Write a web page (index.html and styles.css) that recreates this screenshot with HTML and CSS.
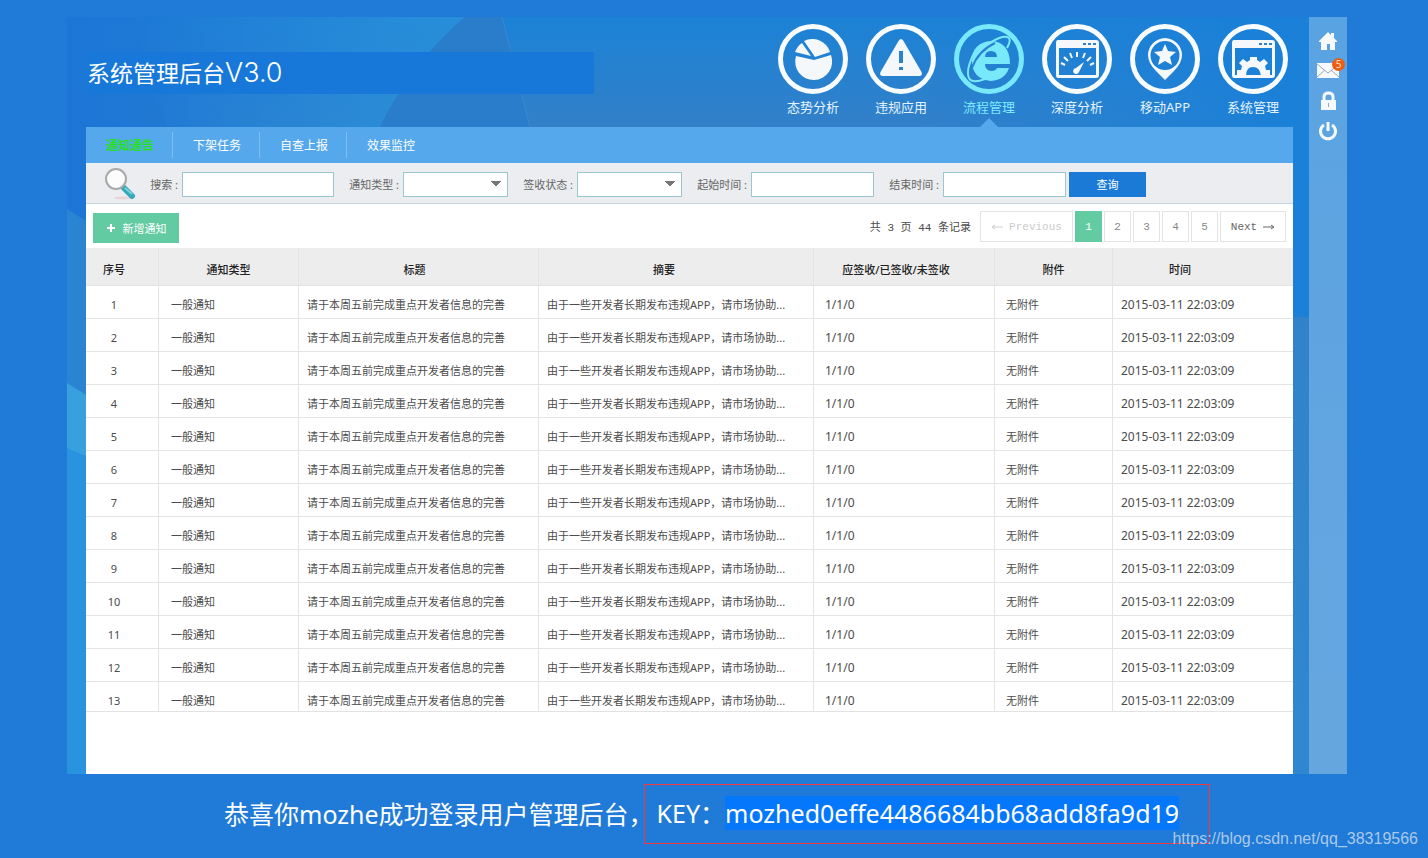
FILE: index.html
```
<!DOCTYPE html>
<html lang="zh-CN">
<head>
  <meta charset="UTF-8">
  <meta name="viewport" content="width=device-width, initial-scale=1">
  <title>系统管理后台V3.0</title>
  <link rel="stylesheet" href="styles.css">
</head>
<body>
  <div class="app">
    <div class="main">
      <svg class="backdrop" viewBox="0 0 1242 757" preserveAspectRatio="none" aria-hidden="true">
        <defs>
          <linearGradient id="beam" x1="0" y1="0" x2="1" y2="0">
            <stop offset="0" stop-color="#2a90da" stop-opacity="0"/>
            <stop offset="1" stop-color="#2a90da" stop-opacity=".9"/>
          </linearGradient>
          <linearGradient id="sky" x1="0" y1="0" x2="0" y2="1">
            <stop offset="0" stop-color="#1c82d6"/>
            <stop offset=".15" stop-color="#3380c8"/>
            <stop offset="1" stop-color="#2f88cf"/>
          </linearGradient>
          <linearGradient id="edge" x1="0" y1="0" x2="1" y2="0">
            <stop offset="0" stop-color="#1c76d6"/>
            <stop offset="1" stop-color="#1c76d6" stop-opacity="0"/>
          </linearGradient>
          <linearGradient id="glow" x1="0" y1="0" x2="1" y2="0">
            <stop offset="0" stop-color="#1a80d8" stop-opacity="0"/>
            <stop offset="1" stop-color="#1a80d8"/>
          </linearGradient>
        </defs>
        <rect width="1242" height="757" fill="url(#sky)"/>
        <rect width="420" height="757" fill="url(#edge)"/>
        <rect x="850" width="392" height="300" fill="url(#glow)"/>
        <path d="M60 0H398Q345 45 313 110H100Z" fill="url(#beam)"/>
        <path d="M398 0H435L463 110H313Q345 45 398 0Z" fill="#2a7dcb"/>
        <path d="M435 0L463 110" stroke="#4a98d6" stroke-opacity=".5"/>
        <path d="M0 192L19 204V757H0Z" fill="#2b84d1"/>
        <path d="M0 366L19 378V757H0Z" fill="#38a0dc"/>
        <path d="M0 431L19 439V757H0Z" fill="#2993e0"/>
      </svg>

      <header class="header">
        <h1 class="brand">系统管理后台<span class="version">V3.0</span></h1>
        <nav class="nav">
          <a class="nav-item" href="#">
            <svg viewBox="0 0 70 70">
              <circle class="ring" cx="35" cy="35" r="32.5"/>
              <path d="M18 32L36 36L53 31A18.500 18.500 0 1 1 18 32Z"/>
              <path d="M37 33L26 17A18.500 18.500 0 0 1 52 28Z"/>
              <path d="M33 32L17 28A19 19 0 0 1 24 19Z"/>
            </svg>
            态势分析
          </a>
          <a class="nav-item" href="#">
            <svg viewBox="0 0 70 70">
              <circle class="ring" cx="35" cy="35" r="32.5"/>
              <path d="M32.500 17Q35 13 37.500 17L55.500 48Q57 52 53 52H17Q13 52 14.500 48Z"/>
              <path class="cut" d="M35 27V39M35 43V46"/>
            </svg>
            违规应用
          </a>
          <a class="nav-item active" href="#">
            <svg viewBox="0 0 70 70">
              <circle class="ring" cx="35" cy="35" r="32.5"/>
              <path fill-rule="evenodd" d="M56 40H31Q31 46 37 47Q42 47 43 44H55Q51 56 37 57Q18 55 18 37Q19 18 37 17Q56 18 56 40ZM31 33H43Q43 27 37 27Q31 27 31 33Z"/>
              <path class="orbit" d="M37 18Q51 10 55 14Q57 17 53 24M22 25Q11 46 15 54Q18 60 31 55"/>
              <path class="gap" d="M18 44Q24 27 41 19"/>
            </svg>
            流程管理
          </a>
          <a class="nav-item" href="#">
            <svg viewBox="0 0 70 70">
              <circle class="ring" cx="35" cy="35" r="32.5"/>
              <path fill-rule="evenodd" d="M16 16H54Q57 16 57 19V51Q57 54 54 54H16Q14 54 14 51V19Q14 16 16 16ZM17 24V51H54V24Z"/>
              <path class="dots" d="M41 20H44M46 20H49M51 20H54"/>
              <path class="line" d="M19 39L23 41M22 33L26 37M28 29L30 34M35 28V33M43 29L41 34M49 33L45 37M52 39L48 41"/>
              <path d="M42 38L37 48A3 3 0 1 1 34 44Z"/>
            </svg>
            深度分析
          </a>
          <a class="nav-item" href="#">
            <svg viewBox="0 0 70 70">
              <circle class="ring" cx="35" cy="35" r="32.5"/>
              <path fill-rule="evenodd" d="M35 14A17.500 17.500 0 0 1 52 31Q52 39 44 47L35 56L26 47Q18 39 18 31A17.500 17.500 0 0 1 35 14ZM35 17A14.500 14.500 0 1 0 35 46A14.500 14.500 0 1 0 35 17Z"/>
              <path d="M35 20L38 27L46 28L40 33L42 41L35 37L28 41L30 33L24 28L32 27Z"/>
            </svg>
            移动APP
          </a>
          <a class="nav-item" href="#">
            <svg viewBox="0 0 70 70">
              <circle class="ring" cx="35" cy="35" r="32.5"/>
              <path fill-rule="evenodd" d="M16 16H54Q57 16 57 19V51Q57 54 54 54H16Q14 54 14 51V19Q14 16 16 16ZM17 24V51H54V24Z"/>
              <path class="dots" d="M41 20H44M46 20H49M51 20H54"/>
              <path d="M19 52V46H23L24 42L21 39L25 35L29 38L32 36V33H39V36L42 38L46 35L50 39L47 42L48 46H52V52H43Q42 43 35 43Q28 43 28 52Z"/>
            </svg>
            系统管理
          </a>
        </nav>
      </header>

      <div class="panel">
        <ul class="tabs">
          <li><a class="current" href="#">通知通告</a></li>
          <li><a href="#">下架任务</a></li>
          <li><a href="#">自查上报</a></li>
          <li><a href="#">效果监控</a></li>
        </ul>

        <form class="search">
          <svg class="magnifier" viewBox="0 0 32 32" aria-hidden="true">
            <ellipse cx="19" cy="30" rx="9" ry="1.500" fill="#e8d4d6"/>
            <path d="M18 19L27 27" stroke="#8d9ba0" stroke-width="4"/>
            <path d="M20 20L28 28" stroke="#35a9ba" stroke-width="6" stroke-linecap="round"/>
            <path d="M21 20L28 26" stroke="#7fd0d8" stroke-width="2"/>
            <circle cx="12" cy="11" r="10" fill="#fcfcfc" stroke="#a9a9a9" stroke-width="2"/>
          </svg>
          <label class="short" for="keyword">搜索 :</label>
          <input class="wide" type="text" id="keyword">
          <label for="type">通知类型 :</label>
          <select id="type"><option></option></select>
          <label for="status">签收状态 :</label>
          <select id="status"><option></option></select>
          <label for="start">起始时间 :</label>
          <input type="text" id="start">
          <label for="end">结束时间 :</label>
          <input type="text" id="end">
          <button class="query" type="button">查询</button>
        </form>

        <div class="toolbar">
          <button class="add" type="button">
            <svg viewBox="0 0 10 10" aria-hidden="true"><path d="M5 1V9M1 5H9"/></svg>
            新增通知
          </button>
          <div class="pager">
            <span class="total">共 3 页 44 条记录</span>
            <button class="prev" type="button" disabled>
              <svg viewBox="0 0 12 8" aria-hidden="true"><path d="M12 4H2M4 2L1 4L4 6"/></svg>
              Previous
            </button>
            <button class="on" type="button">1</button>
            <button type="button">2</button>
            <button type="button">3</button>
            <button type="button">4</button>
            <button type="button">5</button>
            <button class="next" type="button">
              Next
              <svg viewBox="0 0 12 8" aria-hidden="true"><path d="M0 4H10M8 2L11 4L8 6"/></svg>
            </button>
          </div>
        </div>

        <table class="list">
          <colgroup>
            <col class="c-no"><col class="c-type"><col class="c-title"><col class="c-summary">
            <col class="c-sign"><col class="c-file"><col class="c-time">
          </colgroup>
          <thead>
            <tr>
              <th>序号</th>
              <th>通知类型</th>
              <th>标题</th>
              <th>摘要</th>
              <th>应签收/已签收/未签收</th>
              <th>附件</th>
              <th>时间</th>
            </tr>
          </thead>
          <tbody id="rows"></tbody>
        </table>
      </div>
    </div>

    <aside class="rail">
      <a href="#" aria-label="首页">
        <svg viewBox="0 0 20 20"><path d="M10 1L13 4V2H16V7L19 10V11H17V19H12V13H9V19H3V11H1V10Z"/></svg>
      </a>
      <a class="mail" href="#" aria-label="消息">
        <svg viewBox="0 0 22 20"><path d="M0 2H22V17H0Z"/><path class="fold" d="M0 3L11 12L22 3M0 16L8 9M22 16L14 9"/></svg>
        <span class="badge">5</span>
      </a>
      <a href="#" aria-label="锁定">
        <svg viewBox="0 0 20 20"><path d="M3 9H18V19H3Z"/><path class="shackle" d="M6 10V6Q6 2 10.500 2Q15 2 15 6V10"/><path class="fold" d="M10.500 12V16"/></svg>
      </a>
      <a href="#" aria-label="退出">
        <svg viewBox="0 0 20 20"><path class="power" d="M6 4A7.500 7.500 0 1 0 14 4M10 1V10"/></svg>
      </a>
    </aside>
  </div>

  <footer class="result">
    <span>恭喜你mozhe成功登录用户管理后台，</span>
    <div class="key">KEY：<mark>mozhed0effe4486684bb68add8fa9d19</mark></div>
  </footer>
  <div class="watermark">https://blog.csdn.net/qq_38319566</div>

  <script>
    const rows = document.getElementById("rows");
    const cells = ["一般通知", "请于本周五前完成重点开发者信息的完善", "由于一些开发者长期发布违规APP，请市场协助...", "1/1/0", "无附件", "2015-03-11 22:03:09"];

    for (let i = 1; i <= 13; i++) {
      const tr = rows.insertRow();
      tr.insertCell().textContent = i;
      cells.forEach(text => {
        tr.insertCell().textContent = text;
      });
    }
  </script>
</body>
</html>
```
FILE: styles.css
```
* {
  box-sizing: border-box;
}
body {
  margin: 0;
  padding: 17px 81px 0 67px;
  background-color: #207ad8;
  color: #4c4c4c;
  font-size: 11px;
  font-family: "Noto Sans", "Noto Sans CJK SC", sans-serif;
}
a {
  color: inherit;
  text-decoration: none;
}
button, input, select {
  font: inherit;
}
.app {
  display: flex;
}
.main {
  position: relative;
  flex: 1;
  min-width: 0;
  padding: 0 16px 0 19px;
}
.backdrop {
  position: absolute;
  top: 0;
  left: 0;
  width: 100%;
  height: 100%;
}
.header {
  position: relative;
  display: flex;
  justify-content: space-between;
  height: 110px;
  margin-right: -4px;
}
.brand {
  width: 508px;
  height: 42px;
  margin: 35px 0 0;
  padding-left: 1px;
  background-color: #1778d9;
  color: #fff;
  font-size: 23px;
  font-weight: normal;
  line-height: 42px;
}
.version {
  font-family: Inter, sans-serif;
  font-size: 27px;
  font-weight: 300;
}
.nav {
  display: flex;
  padding-top: 7px;
}
.nav-item {
  position: relative;
  display: flex;
  flex-direction: column;
  align-items: center;
  gap: 3px;
  width: 88px;
  color: #e4f3ff;
  font-size: 13px;
  line-height: 20px;
}
.nav-item svg {
  width: 70px;
  height: 70px;
  fill: #f4f8fb;
}
.nav-item .ring {
  fill: none;
  stroke: #f8fcff;
  stroke-width: 5;
}
.nav-item .cut {
  stroke: #2b80cf;
  stroke-width: 4;
}
.nav-item .dots {
  stroke: #2b80cf;
  stroke-width: 2;
}
.nav-item .line {
  stroke: #f4f8fb;
  stroke-width: 2;
}
.nav-item.active {
  color: #7ceaff;
}
.nav-item.active svg {
  fill: #78e8fb;
}
.nav-item.active .ring {
  stroke: #78e8fb;
}
.nav-item .orbit {
  fill: none;
  stroke: #78e8fb;
  stroke-width: 2;
}
.nav-item .gap {
  fill: none;
  stroke: #2b80cf;
  stroke-width: 2;
}
.nav-item.active::after {
  content: "";
  position: absolute;
  bottom: 0;
  border: 9px solid transparent;
  border-top: 0;
  border-bottom-color: #55a8ec;
}
.panel {
  position: relative;
  padding-bottom: 62px;
  background-color: #fff;
}
.tabs {
  display: flex;
  height: 36px;
  margin: 0;
  padding: 5px 0;
  background-color: #55a8ec;
  color: #fff;
  font-size: 12px;
  line-height: 28px;
  list-style: none;
}
.tabs a {
  display: block;
  padding: 0 18px 0 20px;
}
.tabs li + li {
  border-left: 1px solid #7dc0f4;
}
.tabs .current {
  color: #26e01e;
  font-weight: bold;
}
.search {
  display: flex;
  align-items: center;
  height: 41px;
  padding: 2px 18px 0;
  background-color: #ebedf0;
  border-bottom: 1px solid #c5d6de;
  color: #666;
}
.magnifier {
  width: 32px;
  height: 32px;
}
.search label {
  width: 69px;
  padding-right: 4px;
  text-align: right;
}
.search .short {
  width: 46px;
}
.search input, .search select {
  width: 123px;
  height: 25px;
  padding: 0 6px;
  background-color: #fff;
  border: 1px solid #9cc5d2;
  border-radius: 0;
}
.search .wide {
  width: 152px;
}
.search select {
  width: 105px;
  appearance: none;
  background-image: linear-gradient(to bottom left, #777 50%, transparent 50%), linear-gradient(to bottom right, #777 50%, transparent 50%);
  background-position: right 11px center, right 6px center;
  background-size: 5px 6px;
  background-repeat: no-repeat;
}
.query {
  width: 77px;
  height: 25px;
  margin-left: 3px;
  padding: 0;
  background-color: #1a7ad6;
  border: none;
  color: #fff;
}
.toolbar {
  display: flex;
  justify-content: space-between;
  height: 44px;
  padding: 7px 7px 0;
}
.add {
  display: flex;
  align-items: center;
  justify-content: center;
  gap: 7px;
  width: 86px;
  height: 30px;
  margin-top: 2px;
  padding: 0;
  background-color: #62cba2;
  border: none;
  color: #fff;
}
.add svg {
  width: 10px;
  height: 10px;
  stroke: #fff;
  stroke-width: 2;
}
.pager {
  display: flex;
  gap: 2px;
  height: 31px;
  font-family: "Liberation Mono", "Noto Sans CJK SC", monospace;
}
.pager .total {
  margin-right: 7px;
  line-height: 35px;
}
.pager button {
  width: 27px;
  padding: 0;
  background-color: #fff;
  border: 1px solid #e4e4e4;
  color: #888;
}
.pager .on {
  background-color: #62cba2;
  border-color: #62cba2;
  color: #fff;
}
.pager svg {
  width: 12px;
  height: 8px;
  fill: none;
  stroke: currentColor;
}
.pager .prev, .pager .next {
  display: flex;
  align-items: center;
  justify-content: center;
  gap: 6px;
}
.pager .prev {
  width: 93px;
  color: #ccc;
}
.pager .next {
  width: 66px;
  color: #666;
}
.list {
  width: 100%;
  table-layout: fixed;
  border-collapse: separate;
  border-spacing: 0;
  border-bottom: 1px solid #e2e2e2;
}
.c-no {
  width: 72px;
}
.c-type {
  width: 140px;
}
.c-title {
  width: 240px;
}
.c-summary {
  width: 275px;
}
.c-sign {
  width: 181px;
}
.c-file {
  width: 118px;
}
.c-time {
  width: 181px;
}
.list th {
  height: 38px;
  padding: 4px 0 0;
  background-color: #ededee;
  border-bottom: 1px solid #e2e2e2;
  color: #222;
  font-weight: 500;
}
.list td {
  height: 33px;
  padding: 6px 0 0 8px;
  border-bottom: 1px solid #e4e4e4;
  line-height: 20px;
  white-space: nowrap;
  overflow: hidden;
}
.list th + th, .list td + td {
  border-left: 1px solid #e4e4e4;
}
.list td:first-child {
  padding-left: 0;
  padding-right: 16px;
  text-align: center;
}
.list th:first-child, .list th:nth-child(5) {
  padding-right: 16px;
}
.list th:nth-child(3) {
  padding-right: 8px;
}
.list th:nth-child(4) {
  padding-right: 24px;
}
.list th:last-child {
  padding-right: 46px;
}
.list td:nth-child(2) {
  padding-left: 12px;
}
.list td:nth-child(5), .list td:nth-child(6) {
  padding-left: 11px;
}
.list td:nth-child(5), .list td:nth-child(7) {
  font-size: 12px;
}
.list tr:last-child td {
  height: 29px;
  padding-top: 8px;
  border-bottom: none;
}
.rail {
  display: flex;
  flex-direction: column;
  align-items: center;
  gap: 10px;
  width: 38px;
  padding-top: 14px;
  background: linear-gradient(#5aa3e2, #66a6df);
}
.rail a {
  position: relative;
  height: 20px;
}
.rail svg {
  width: 20px;
  height: 20px;
  fill: #f6fafd;
}
.rail .mail svg {
  width: 22px;
}
.rail .fold {
  fill: none;
  stroke: #9aa7b2;
}
.rail .shackle, .rail .power {
  fill: none;
  stroke: #f6fafd;
  stroke-width: 3;
}
.badge {
  position: absolute;
  top: -3px;
  right: -6px;
  width: 13px;
  height: 13px;
  background-color: #ea5f16;
  border-radius: 50%;
  color: #ffd9b8;
  font-size: 10px;
  line-height: 13px;
  text-align: center;
}
.result {
  display: flex;
  align-items: center;
  padding: 10px 0 14px 157px;
  color: #fff;
  font-size: 25px;
  line-height: 34px;
  white-space: nowrap;
}
.key {
  min-width: 566px;
  margin-left: -10px;
  padding: 11px 19px 13px 12px;
  border: 1px solid #f03a3e;
}
.key mark {
  background-color: #0577fb;
  color: #fff;
}
.watermark {
  position: absolute;
  right: 10px;
  bottom: 9px;
  color: #a9c9ea;
  font-family: "Liberation Sans", Arial, sans-serif;
  font-size: 16px;
  line-height: 20px;
}
```
